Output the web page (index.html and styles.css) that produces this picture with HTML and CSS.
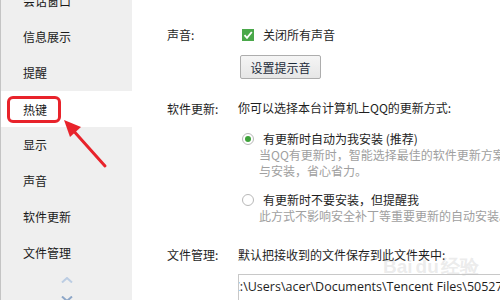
FILE: index.html
```html
<!DOCTYPE html>
<html>
	<head>
		<title>设置</title>
		<link rel="stylesheet" href="styles.css">
	</head>

	<body>
		<div id="window">
			<div id="sidebar">
				<div class="navItem">会话窗口</div>
				<div class="navItem">信息展示</div>
				<div class="navItem">提醒</div>
				<div class="navItem selected"><span class="hotMark">热键</span></div>
				<div class="navItem">显示</div>
				<div class="navItem">声音</div>
				<div class="navItem">软件更新</div>
				<div class="navItem">文件管理</div>
				<div class="scroller">
					<svg class="chev up" width="12" height="6" viewBox="0 0 12 6"><path d="M1 5.5 L6 1 L11 5.5" fill="none" stroke="#bccde3" stroke-width="2"/></svg>
					<svg class="chev down" width="12" height="6" viewBox="0 0 12 6"><path d="M1 0.5 L6 5 L11 0.5" fill="none" stroke="#8ea7c8" stroke-width="2"/></svg>
				</div>
			</div>

			<div id="content">
				<div class="row soundRow">
					<div class="label">声音:</div>
					<div class="field">
						<div class="check">
							<span class="box"><svg width="12" height="12" viewBox="0 0 12 12"><path d="M2.5 6.2 L5 8.8 L9.8 3" fill="none" stroke="#fff" stroke-width="1.8"/></svg></span>
							<span>关闭所有声音</span>
						</div>
						<button class="btn">设置提示音</button>
					</div>
				</div>

				<div class="row updateRow">
					<div class="label">软件更新:</div>
					<div class="field">
						<div class="lead">你可以选择本台计算机上QQ的更新方式:</div>
						<div class="option">
							<span class="radio on"></span>
							<span>有更新时自动为我安装 (推荐)</span>
						</div>
						<div class="desc">当QQ有更新时，智能选择最佳的软件更新方案，自动下载<br>与安装，省心省力。</div>
						<div class="option second">
							<span class="radio"></span>
							<span>有更新时不要安装，但提醒我</span>
						</div>
						<div class="desc">此方式不影响安全补丁等重要更新的自动安装。</div>
					</div>
				</div>

				<div class="row fileRow">
					<div class="label">文件管理:</div>
					<div class="field">
						<div class="lead">默认把接收到的文件保存到此文件夹中:</div>
						<div class="pathBox"><span class="pathText">C:\Users\acer\Documents\Tencent Files\505274821\FileRecv</span></div>
					</div>
				</div>

				<div class="watermark">Bai<span class="paw">du</span>经验</div>
			</div>

			<svg id="arrow" width="60" height="60" viewBox="0 0 60 60">
				<line x1="50" y1="53" x2="16" y2="15" stroke="#e8232b" stroke-width="3" stroke-linecap="round"/>
				<polygon points="9,7 26,14 15,24" fill="#e8232b"/>
			</svg>
		</div>
	</body>
</html>
```

FILE: styles.css
```css
body {
	margin: 0;
	font-family: "Noto Sans CJK SC", "Noto Sans", sans-serif;
	font-size: 12px;
	color: #1e1e1e;
	overflow: hidden;
}

#window {
	display: flex;
	width: 500px;
	height: 300px;
	position: relative;
	overflow: hidden;
	background: white;
}

#sidebar {
	width: 131px;
	flex: none;
	background: #efefef;
	border-left: 1px solid #c4c4c4;
	position: relative;
}

.navItem {
	height: 36px;
	line-height: 36px;
	padding-left: 22px;
	color: #1a1a1a;
}

.navItem:first-child {
	margin-top: -17px;
}

.selected {
	background: white;
	display: flex;
	align-items: center;
	padding-left: 6px;
}

.hotMark {
	display: block;
	height: 21px;
	line-height: 21px;
	padding: 0 11px 0 13px;
	border: 3px solid #e8232b;
	border-radius: 6px;
	margin-top: 1px;
}

.scroller {
	position: absolute;
	left: 60px;
	top: 277px;
	display: flex;
	flex-direction: column;
	gap: 13px;
}

.chev {
	display: block;
}

#content {
	flex: 1;
	padding-left: 35px;
	position: relative;
}

.row {
	display: flex;
}

.label {
	width: 71px;
	flex: none;
	line-height: 16px;
}

.field {
	display: flex;
	flex-direction: column;
	align-items: flex-start;
	line-height: 16px;
}

.soundRow {
	margin-top: 27px;
}

.check {
	display: flex;
	align-items: center;
	gap: 9px;
	padding-left: 4px;
}

.box {
	width: 12px;
	height: 12px;
	background: #4aa84a;
	display: block;
}

.box svg {
	display: block;
}

.btn {
	margin-top: 12px;
	margin-left: 2px;
	width: 81px;
	height: 24px;
	padding: 0;
	font-family: inherit;
	font-size: 12px;
	color: #1c2b3a;
	border: 1px solid #adadad;
	border-radius: 2px;
	background: linear-gradient(#f5f5f5, #e6e6e6);
}

.updateRow {
	margin-top: 21px;
}

.updateRow .label {
	padding-top: 1px;
}

.lead {
	color: #1e1e1e;
}

.option {
	display: flex;
	align-items: center;
	gap: 9px;
	padding-left: 4px;
	margin-top: 15px;
}

.option.second {
	margin-top: 13px;
}

.radio {
	width: 10px;
	height: 10px;
	border: 1px solid #b8b8b8;
	border-radius: 50%;
	background: white;
	position: relative;
}

.radio.on::after {
	content: "";
	position: absolute;
	left: 2px;
	top: 2px;
	width: 6px;
	height: 6px;
	border-radius: 50%;
	background: #3ea23a;
}

.desc {
	color: #a0a0a0;
	padding-left: 21px;
	white-space: nowrap;
}

.fileRow {
	margin-top: 23px;
}

.pathBox {
	margin-top: 11px;
	width: 300px;
	height: 26px;
	border: 1px solid #c8c8c8;
	overflow: hidden;
	white-space: nowrap;
}

.pathText {
	display: inline-block;
	margin-left: -7px;
	font-family: "Open Sans", "Noto Sans", sans-serif;
	font-size: 12.5px;
	line-height: 24px;
	color: #1e1e1e;
}

.watermark {
	position: absolute;
	left: 251px;
	top: 254px;
	font-family: "Liberation Sans", sans-serif;
	font-size: 19px;
	font-weight: bold;
	color: rgba(190, 190, 190, 0.3);
}

.paw {
	margin-left: 3px;
	margin-right: 2px;
}

#arrow {
	position: absolute;
	left: 55px;
	top: 113px;
}
```
